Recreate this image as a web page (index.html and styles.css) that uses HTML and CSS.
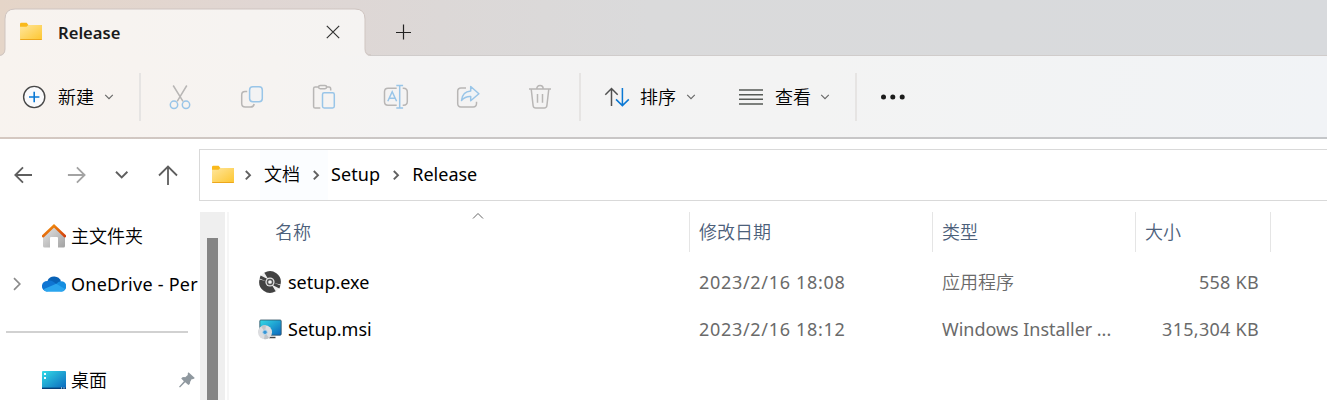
FILE: index.html
```html
<!DOCTYPE html>
<html lang="zh-CN">
<head>
<meta charset="utf-8">
<title>Release</title>
<link rel="stylesheet" href="styles.css">
</head>
<body>
<svg class="defs" width="0" height="0">
  <defs>
    <linearGradient id="gFolder" x1="0" y1="0" x2="1" y2="1"><stop offset="0" stop-color="#ffe69c"/><stop offset="1" stop-color="#fdc62f"/></linearGradient>
    <linearGradient id="gWall" x1="0" y1="0" x2="1" y2="1"><stop offset="0" stop-color="#e6e6e6"/><stop offset="1" stop-color="#a2a2a2"/></linearGradient>
    <linearGradient id="gRoof" x1="0" y1="0" x2="1" y2="1"><stop offset="0" stop-color="#f6960c"/><stop offset="1" stop-color="#d2400e"/></linearGradient>
    <linearGradient id="gDesk" x1="0" y1="0" x2="1" y2="1"><stop offset="0" stop-color="#33dbe6"/><stop offset="1" stop-color="#0a66bd"/></linearGradient>
    <linearGradient id="gTab" x1="0" y1="0" x2="1" y2="0"><stop offset="0" stop-color="#f8f3ef"/><stop offset="1" stop-color="#f5f3f2"/></linearGradient>
  </defs>
  <symbol id="folder" viewBox="0 0 24 20"><path d="M1 2.2Q1 .8 2.2.8H7.6L9.4 3H22Q23 3 23 4.4V10H1Z" fill="#f9b91c"/><path d="M1 4.8H7.5L9.3 3H22Q23 3 23 4V16.6Q23 18 22 18H2.2Q1 18 1 16.6Z" fill="url(#gFolder)"/><path d="M1.2 17.5H22.8" stroke="#eda71b"/></symbol>
  <symbol id="down" viewBox="0 0 10 8"><path d="M1.2 1.8 5 5.6 8.8 1.8" fill="none" stroke="currentColor" stroke-width="1.1"/></symbol>
  <symbol id="right" viewBox="0 0 8 12"><path d="M1.8 2 6 6.2 1.8 10.4" fill="none" stroke="#606060" stroke-width="1.9"/></symbol>
</svg>

<header class="tabbar">
  <svg class="tabshape" width="372" height="48" viewBox="0 0 372 48"><path d="M-2 48Q5 48 5 42V11Q5 1 15 1H355Q365 1 365 11V42Q365 48 371 48Z" fill="url(#gTab)"/><path d="M-2 47.5Q5 47.5 5 41V11Q5 1 15 1H355Q365 1 365 11V41Q365 47 371 47" fill="none" stroke="#cfc5c1"/></svg>
  <div class="tab">
    <svg width="24" height="20"><use href="#folder"/></svg>
    <span class="tabname">Release</span>
    <svg width="14" height="14" viewBox="0 0 14 14"><path d="M.8.8 13.2 13.2M13.2.8.8 13.2" stroke="#333" stroke-width="1.2"/></svg>
  </div>
  <svg class="newtab" width="16" height="16" viewBox="0 0 16 16"><path d="M7.5 .5V15.5M0 8.5H15" stroke="#222" stroke-width="1.2"/></svg>
</header>

<nav class="toolbar">
  <div class="tool new">
    <svg width="24" height="24" viewBox="0 0 24 24" fill="none"><circle cx="12.2" cy="12" r="10.6" fill="#fafafc" stroke="#484848" stroke-width="1.4"/><path d="M12.2 6.8V17.2M7 12H17.4" stroke="#0a78d4" stroke-width="1.6"/></svg>
    <span class="label">新建</span>
    <svg width="10" height="8"><use href="#down"/></svg>
  </div>
  <i class="sep"></i>
  <div class="actions">
    <svg width="26" height="26" viewBox="0 0 26 26" fill="none" stroke-width="1.5"><path d="M6.2 1.5 16 17.3M19.8 1.5 10.2 17.3" stroke="#b8b6b5"/><g stroke="#99c5e8"><circle cx="7" cy="20.8" r="3.7"/><circle cx="19" cy="20.8" r="3.7"/></g></svg>
    <svg width="26" height="26" viewBox="0 0 26 26" fill="none" stroke-width="1.5"><path d="M8.2 7.5H6Q2.7 7.5 2.7 11V19.5Q2.7 23 6.2 23H11.5Q14.6 23 15.2 20" stroke="#b8b6b5"/><rect x="10.6" y="2.7" width="12.7" height="15" rx="3.2" stroke="#99c5e8" fill="#f3f3f4"/></svg>
    <svg width="26" height="26" viewBox="0 0 26 26" fill="none" stroke-width="1.5"><path d="M7.5 3H4.2Q2.6 3 2.6 4.6V22.4Q2.6 24 4.2 24H9.3M15.8 3H18Q19.7 3 19.7 5V6.5" stroke="#b8b6b5"/><rect x="7.6" y="1.4" width="8" height="3.3" rx="1.6" stroke="#b8b6b5"/><rect x="11.5" y="8.8" width="11.8" height="15.2" rx="1.7" stroke="#99c5e8"/></svg>
    <svg width="26" height="26" viewBox="0 0 26 26" fill="none" stroke-width="1.5"><path d="M13.7 4.2H5Q1.5 4.2 1.5 7.7V17.7Q1.5 21.2 5 21.2H13.7M19.7 4.2H20.5Q24.3 4.2 24.3 8V17.5Q24.3 21.2 20.5 21.2H19.7" stroke="#b8b6b5"/><path d="M4.8 17.3 9.2 7.8 13.6 17.3M6.3 14.3H12.1M16.7 1.8V23.8M13.3 1.5H20.1M13.3 24H20.1" stroke="#99c5e8"/></svg>
    <svg width="26" height="26" viewBox="0 0 26 26" fill="none" stroke-width="1.5" stroke-linejoin="round"><path d="M11 4H6Q2.7 4 2.7 7.3V19.5Q2.7 22.9 6 22.9H18.2Q21.5 22.9 21.5 19.5V17.7" stroke="#b8b6b5"/><path d="M15.7 2.5 23.9 9.7 15.7 16.7V12.6Q10.5 12.2 6.5 16.5Q7.2 7.6 15.7 6.9Z" stroke="#99c5e8" fill="#f0f3f6"/></svg>
    <svg width="26" height="26" viewBox="0 0 26 26" fill="none" stroke-width="1.5" stroke="#b8b6b5"><path d="M2 5H24M9.8 5Q9.8 1.6 13 1.6T16.2 5M4.2 5 6.1 21.5Q6.4 24 8.8 24H17.2Q19.6 24 19.9 21.5L21.8 5M10.5 10V18.7M15.5 10V18.7"/></svg>
  </div>
  <i class="sep"></i>
  <div class="tool sort">
    <svg width="26" height="22" viewBox="0 0 26 22" fill="none" stroke-width="1.5"><path d="M7.5 20V2.8M1.3 8.7 7.5 2.5 13.7 8.7" stroke="#505050"/><path d="M18.4 2V19.4M12 13.4 18.4 19.6 24.8 13.4" stroke="#0a78d4"/></svg>
    <span class="label">排序</span>
    <svg width="10" height="8"><use href="#down"/></svg>
  </div>
  <div class="tool view">
    <svg width="24" height="16" viewBox="0 0 24 16"><path d="M0 1H24M0 5.7H24M0 10.3H24M0 15H24" stroke="#565a56" stroke-width="1.4"/></svg>
    <span class="label">查看</span>
    <svg width="10" height="8"><use href="#down"/></svg>
  </div>
  <i class="sep"></i>
  <svg class="more" width="26" height="6" viewBox="0 0 26 6" fill="#1b1b1b"><circle cx="3.5" cy="3" r="2.5"/><circle cx="12.8" cy="3" r="2.5"/><circle cx="22.2" cy="3" r="2.5"/></svg>
</nav>

<div class="addressrow">
  <div class="navbuttons">
    <svg width="20" height="18" viewBox="0 0 20 18" fill="none" stroke="#5e5e5e" stroke-width="1.8"><path d="M19 9H2.5M10 1.3 2.3 9 10 16.7"/></svg>
    <svg width="20" height="18" viewBox="0 0 20 18" fill="none" stroke="#a3a3a3" stroke-width="1.8"><path d="M.9 9H17.4M9.9 1.3 17.6 9 9.9 16.7"/></svg>
    <svg width="14" height="10" viewBox="0 0 14 10" fill="none" stroke="#5e5e5e" stroke-width="1.9"><path d="M1 1.8 6.7 7.4 12.4 1.8"/></svg>
    <svg width="20" height="20" viewBox="0 0 20 20" fill="none" stroke="#5e5e5e" stroke-width="1.8"><path d="M10 20V1.8M1 10.5 10 1.5 19 10.5"/></svg>
  </div>
  <div class="address">
    <svg class="afolder" width="24" height="20"><use href="#folder"/></svg>
    <svg class="crumbarrow" width="8" height="12"><use href="#right"/></svg>
    <span class="crumb hot"><span class="zh">文档</span><svg width="8" height="12"><use href="#right"/></svg></span>
    <span class="crumb setup">Setup</span>
    <svg class="crumbarrow" width="8" height="12"><use href="#right"/></svg>
    <span class="crumb rel">Release</span>
  </div>
</div>

<main class="body">
  <aside class="side">
    <div class="item">
      <svg class="ico" width="24" height="24" viewBox="0 0 24 24"><path d="M1 12 12 2 23 12V22Q23 23.5 21.5 23.5H16V14Q16 13 15 13H9Q8 13 8 14V23.5H2.5Q1 23.5 1 22Z" fill="url(#gWall)"/><path d="M1 12.2 12 1.8 23 12.2" fill="none" stroke="url(#gRoof)" stroke-width="2.6" stroke-linecap="round"/></svg>
      <span class="zh">主文件夹</span>
    </div>
    <div class="item">
      <svg class="expand" width="8" height="14" viewBox="0 0 8 14" fill="none" stroke="#8b8b8b" stroke-width="1.7"><path d="M1 1.2 6.8 7 1 12.8"/></svg>
      <svg class="ico" width="24" height="16" viewBox="0 0 24 16"><path d="M5.5 4.5A7.4 7.4 0 0 1 19 5.3L14 10Z" fill="#0862b6"/><path d="M5 15.6A5.3 5.3 0 0 1 5.5 4.9Q8 3.8 11 5.5L16 9Z" fill="#0f75d2"/><path d="M14.2 8Q16.5 5 19 5.2A5.2 5.2 0 0 1 19.3 15.6L10 12Z" fill="#168ee0"/><path d="M1.5 13.2 14.2 7.8 23 13Q22 15.7 19 15.7H5Q2.8 15.5 1.5 13.2Z" fill="#2aa5ee"/></svg>
      <span class="od">OneDrive - Per</span>
    </div>
    <hr class="rule">
    <div class="item">
      <svg class="ico" width="24" height="18" viewBox="0 0 24 18"><rect width="24" height="18" rx="1" fill="url(#gDesk)"/><path d="M0 17.3H24" stroke="#073f78" stroke-width="1.4"/><path d="M2 2H4V4H2ZM2 6H4V8H2Z" fill="#f4ffff"/><path d="M19 17H20M21.5 17H22.5" stroke="#fff"/></svg>
      <span class="zh">桌面</span>
      <svg class="pin" width="16" height="16" viewBox="0 0 16 16" fill="#8f989f"><path d="M9.5.3 15.8 6.1Q14.7 7.5 12.8 7.1L11.3 9.4Q11.3 12 9.4 13L6.2 10.2 1 15.6 0 14.8 4.9 9.2 2.2 6.5Q3.6 4.6 6.2 5.2L8.8 3Q8.3 1.5 9.5.3Z"/></svg>
    </div>
  </aside>
  <div class="scroll"><div class="thumb"></div></div>
  <section class="files">
    <svg class="sortmark" width="12" height="8" viewBox="0 0 12 8"><path d="M1 6.5 6 1.5 11 6.5" fill="none" stroke="#666"/></svg>
    <div class="row head"><span class="name">名称</span><span>修改日期</span><span>类型</span><span>大小</span></div>
    <div class="row">
      <span class="name"><svg width="24" height="24" viewBox="0 0 24 24"><circle cx="12" cy="12" r="11" fill="#eee"/><path d="M12 12 6.3 2.8A10.8 10.8 0 0 1 22.5 14.5ZM12 12 17.7 21.2A10.8 10.8 0 0 1 1.5 9.5Z" fill="#424242"/><path d="M2.6 5.6 10 9.2 8.5 11.5 1.6 8.4ZM21.4 18.4 14 14.8 15.5 12.5 22.4 15.6Z" fill="#424242"/><circle cx="12" cy="12" r="4.6" fill="#e6e6e6"/><circle cx="12" cy="12" r="2.6" fill="#f5f5f5" stroke="#555" stroke-width="1.5"/></svg><b class="fn exe">setup.exe</b></span>
      <span class="date">2023/2/16 18:08</span><span class="zh">应用程序</span><span class="size small">558 KB</span>
    </div>
    <div class="row">
      <span class="name"><svg width="24" height="24" viewBox="0 0 24 24"><rect x="1.8" y="3" width="21.4" height="15.2" rx="1" fill="url(#gDesk)" stroke="#315263" stroke-width=".8"/><path d="M11 20.5H17.5" stroke="#444" stroke-width="1.5"/><circle cx="7" cy="15.2" r="7" fill="#dcdde0"/><path d="M7 15.2 3 9.5A7 7 0 0 1 8 8.3ZM7 15.2 11 20.9A7 7 0 0 1 6 22.1Z" fill="#c0c4c8"/><circle cx="7" cy="15.2" r="2.3" fill="#3495d7" stroke="#bfd8e8"/></svg><b class="fn msi">Setup.msi</b></span>
      <span class="date">2023/2/16 18:12</span><span class="type">Windows Installer ...</span><span class="size">315,304 KB</span>
    </div>
  </section>
</main>
</body>
</html>
```

FILE: styles.css
```css
* { box-sizing: border-box; }
body {
  margin: 0;
  height: 400px;
  overflow: hidden;
  background: #fff;
  color: #000;
  font: 18px/24px "Noto Sans", "Noto Sans CJK SC", sans-serif;
}
svg { display: block; flex: none; }
.defs { position: absolute; }
.zh, .label, .head { font-weight: 350; }
.tabbar {
  position: relative;
  display: flex;
  align-items: center;
  height: 56px;
  padding-top: 9px;
  border-bottom: 1px solid #d0cccb;
  background: linear-gradient(90deg, #e5d5c8 0, #e0d6d3 260px, #dcd8d7 440px, #dadadb 650px, #d8dadd 100%);
}
.tabshape { position: absolute; left: 0; top: 8px; }
.tab {
  position: relative;
  display: flex;
  align-items: center;
  width: 365px;
  padding: 0 25px 0 19px;
}
.tabname { flex: 1; margin: 2px 0 0 15px; font-weight: 600; font-size: 16.6px; color: #1b1b1b; }
.newtab { margin-left: 31px; }
.toolbar {
  display: flex;
  align-items: center;
  height: 83px;
  background: linear-gradient(100deg, #f8f3ef 0, #f6f3f1 270px, #f4f3f3 400px, #f3f3f3 800px, #f1f3f6 100%);
  border-bottom: 2px solid;
  border-image: linear-gradient(90deg, #d5c8c1, #cac6c5 400px, #c4c6c9) 1;
}
.tool { display: flex; align-items: center; color: #666; }
.label { margin: 0 9px 0 12px; color: #000; }
.new { width: 139px; padding-left: 22px; }
.new .label { margin-right: 10px; }
.sep { width: 2px; height: 48px; background: #e6e4e3; }
.actions { display: flex; gap: 46px; width: 438px; padding-left: 26px; }
.sort { width: 157px; padding-left: 23px; }
.sort .label { margin-left: 10px; margin-right: 10px; }
.view { width: 117px; padding-left: 1px; }
.more { margin-left: 23px; }
.addressrow { display: flex; height: 73px; padding-top: 10px; }
.navbuttons { display: flex; align-items: center; width: 199px; height: 51px; padding-left: 13px; }
.navbuttons svg:nth-child(2) { margin-left: 34px; }
.navbuttons svg:nth-child(3) { margin-left: 28px; }
.navbuttons svg:nth-child(4) { margin-left: 29px; }
.address {
  display: flex;
  align-items: center;
  flex: 1;
  height: 52px;
  border: 1px solid #d9d9d9;
  border-right: 0;
}
.crumb { margin-top: -2px; }
.afolder { margin: -1px 9px 0 11px; }
.hot { display: flex; align-items: center; gap: 12px; height: 50px; margin: 0 0 0 8px; padding: 0 8px 0 4px; background: #fbfdff; }
.hot .zh { margin-top: -2px; }
.setup { margin: -2px 12px 0 3px; letter-spacing: .1px; }
.rel { margin-left: 12px; }
.body { display: flex; height: 188px; }
.side { width: 200px; }
.item { position: relative; display: flex; align-items: center; height: 48px; padding-left: 42px; white-space: nowrap; }
.item .ico { margin-right: 5px; }
.od { letter-spacing: .24px; }
.expand { position: absolute; left: 13px; }
.pin { position: absolute; right: 5px; }
.rule { width: 182px; height: 2px; margin: 23px 0 23px 6px; border: 0; background: #d1d1d1; }
.scroll { width: 25px; padding: 26px 7px 0; background: #efefef; }
.thumb { width: 11px; height: 162px; background: #858585; }
.files { position: relative; flex: 1; margin-left: 2px; border-left: 2px solid #f6f6f6; }
.sortmark { position: absolute; left: 243px; top: 0; }
.row { display: grid; grid-template-columns: 461px 243px 203px 135px; height: 47px; align-items: center; color: #6a6a6a; }
.row > span { padding-left: 9px; white-space: nowrap; }
.row .name { display: flex; align-items: center; padding-left: 29px; }
.head { height: 40px; color: #4c607a; margin-bottom: 6px; }
.head > span { height: 40px; line-height: 41px; border-right: 1px solid #e5e5e5; }
.head .name { padding-left: 46px; }
.fn { font-weight: 400; color: #000; margin-left: 6px; }
.date { letter-spacing: .69px; }
.type { letter-spacing: -.04px; }
.row .size { padding-right: 12px; text-align: right; letter-spacing: .28px; }
```
